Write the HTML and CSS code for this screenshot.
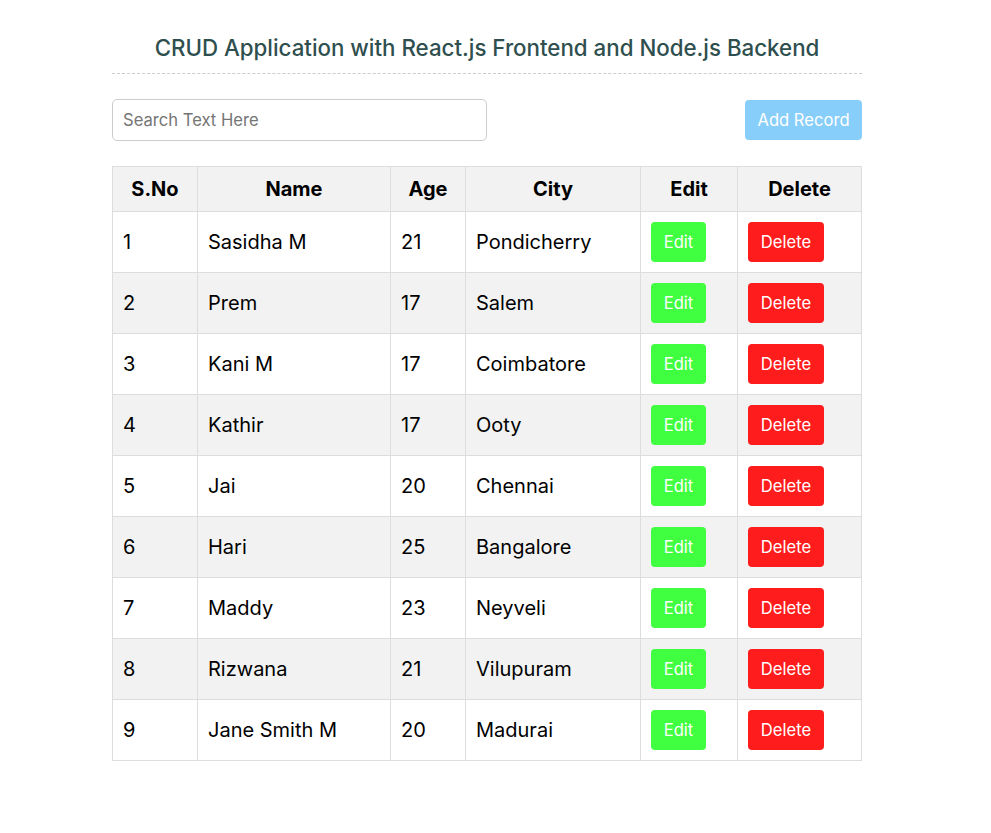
FILE: index.html
```html
<!DOCTYPE html>
<html>
<head>
<meta charset="utf-8">
<link rel="stylesheet" href="styles.css">
</head>
<body>
<div class="container">
  <h2 class="title">CRUD Application with React.js Frontend and Node.js Backend</h2>
  <div class="toolbar">
    <input class="search" type="text" placeholder="Search Text Here">
    <button class="btn btn-add">Add Record</button>
  </div>
  <table class="table">
    <thead>
      <tr>
        <th class="c1">S.No</th>
        <th class="c2">Name</th>
        <th class="c3">Age</th>
        <th class="c4">City</th>
        <th class="c5">Edit</th>
        <th class="c6">Delete</th>
      </tr>
    </thead>
    <tbody>
      <tr><td>1</td><td>Sasidha M</td><td>21</td><td>Pondicherry</td><td><button class="btn btn-edit">Edit</button></td><td><button class="btn btn-del">Delete</button></td></tr>
      <tr><td>2</td><td>Prem</td><td>17</td><td>Salem</td><td><button class="btn btn-edit">Edit</button></td><td><button class="btn btn-del">Delete</button></td></tr>
      <tr><td>3</td><td>Kani M</td><td>17</td><td>Coimbatore</td><td><button class="btn btn-edit">Edit</button></td><td><button class="btn btn-del">Delete</button></td></tr>
      <tr><td>4</td><td>Kathir</td><td>17</td><td>Ooty</td><td><button class="btn btn-edit">Edit</button></td><td><button class="btn btn-del">Delete</button></td></tr>
      <tr><td>5</td><td>Jai</td><td>20</td><td>Chennai</td><td><button class="btn btn-edit">Edit</button></td><td><button class="btn btn-del">Delete</button></td></tr>
      <tr><td>6</td><td>Hari</td><td>25</td><td>Bangalore</td><td><button class="btn btn-edit">Edit</button></td><td><button class="btn btn-del">Delete</button></td></tr>
      <tr><td>7</td><td>Maddy</td><td>23</td><td>Neyveli</td><td><button class="btn btn-edit">Edit</button></td><td><button class="btn btn-del">Delete</button></td></tr>
      <tr><td>8</td><td>Rizwana</td><td>21</td><td>Vilupuram</td><td><button class="btn btn-edit">Edit</button></td><td><button class="btn btn-del">Delete</button></td></tr>
      <tr><td>9</td><td>Jane Smith M</td><td>20</td><td>Madurai</td><td><button class="btn btn-edit">Edit</button></td><td><button class="btn btn-del">Delete</button></td></tr>
    </tbody>
  </table>
</div>
</body>
</html>
```
FILE: styles.css
```css
html, body {
  margin: 0;
  padding: 0;
  background: #fff;
}
body {
  font-family: Inter, "Liberation Sans", sans-serif;
  color: #000;
}
.container {
  width: 750px;
  margin-left: 112px;
  padding-top: 33px;
}
.title {
  margin: 0;
  font-size: 22.3px;
  font-weight: 500;
  color: #2f4f4f;
  text-align: center;
  line-height: 30px;
  padding-bottom: 10px;
  border-bottom: 1px dashed #ccc;
}
.toolbar {
  display: flex;
  justify-content: space-between;
  align-items: center;
  margin-top: 25px;
  height: 42px;
}
.search {
  box-sizing: border-box;
  width: 375px;
  height: 42px;
  padding: 0 10px;
  border: 1px solid #ccc;
  border-radius: 5px;
  font-family: inherit;
  font-size: 16.6px;
  outline: none;
}
.search::placeholder {
  color: #757575;
}
.btn {
  border: none;
  border-radius: 4px;
  color: #fff;
  font-family: inherit;
  cursor: pointer;
  display: block;
  padding: 0;
}
.btn-add {
  width: 117px;
  height: 40px;
  background: #87cefa;
  font-size: 16.6px;
}
.table {
  margin-top: 25px;
  width: 749px;
  border-collapse: collapse;
  table-layout: fixed;
}
.table th,
.table td {
  box-sizing: border-box;
  border: 1px solid #ddd;
  font-size: 20px;
  padding: 0 10px;
}
.table th {
  height: 45px;
  font-weight: 700;
  text-align: center;
  background: #f2f2f2;
}
.table td {
  height: 61px;
  text-align: left;
}
.table tbody tr:nth-child(even) td {
  background: #f2f2f2;
}
.c1 { width: 85px; }
.c2 { width: 193px; }
.c3 { width: 75px; }
.c4 { width: 175px; }
.c5 { width: 97px; }
.c6 { width: 124px; }
.btn-edit {
  width: 55px;
  height: 40px;
  background: #40fe40;
  font-size: 16.6px;
}
.btn-del {
  width: 76px;
  height: 40px;
  background: #ff1c1c;
  font-size: 16.6px;
}
```
